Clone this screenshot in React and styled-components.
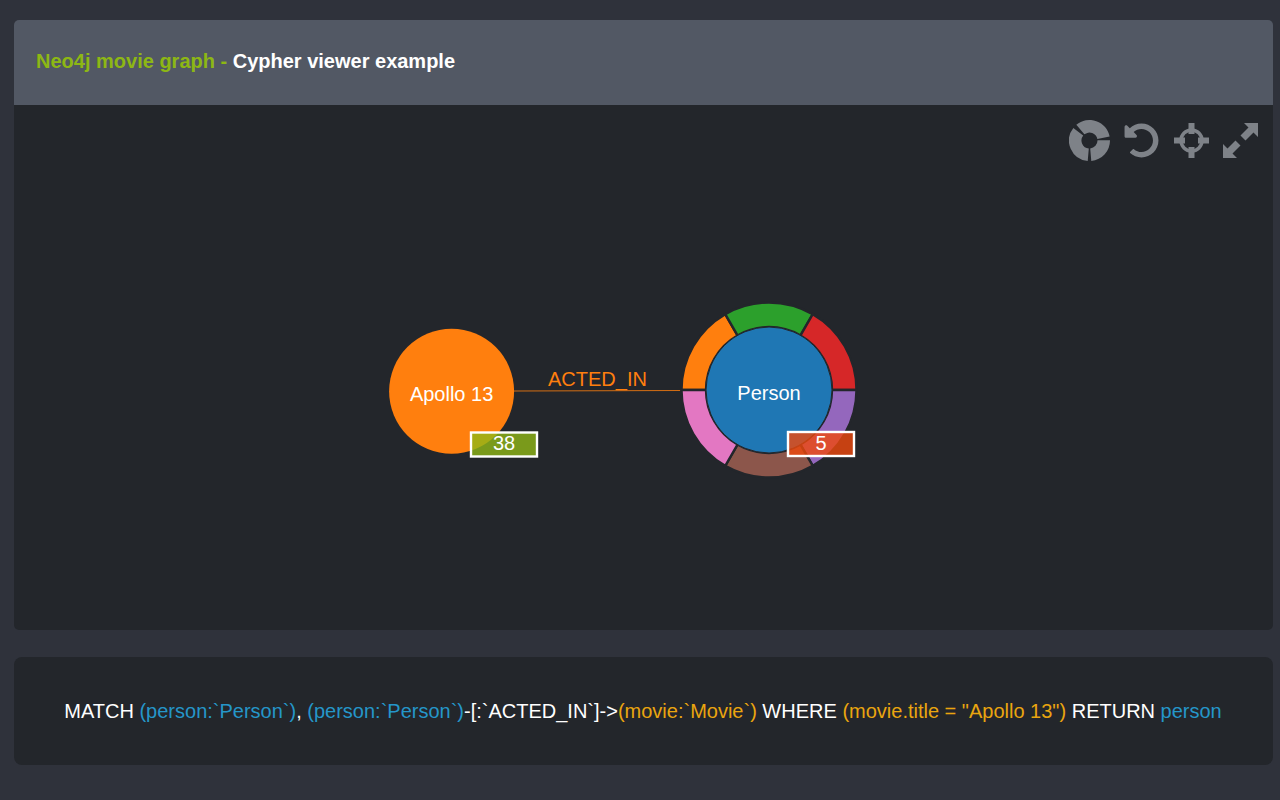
import React from 'react';
import styled, { createGlobalStyle } from 'styled-components';
import { FaUndoAlt } from 'react-icons/fa';

const GlobalStyle = createGlobalStyle`
  html, body {
    margin: 0;
    height: 100%;
    background-color: #2f323b;
    font-family: "Liberation Sans", Arial, sans-serif;
  }
`;

const Page = styled.div`
  display: flex;
  flex-direction: column;
  padding: 20px 7px 35px 14px;
`;

const Header = styled.header`
  display: flex;
  align-items: center;
  height: 85px;
  padding-left: 22px;
  padding-bottom: 2px;
  box-sizing: border-box;
  background-color: #525864;
  border-radius: 5px 5px 0 0;
  font-size: 20px;
  font-weight: bold;
  color: #ffffff;
`;

const Accent = styled.span`
  color: #8db714;
  white-space: pre;
`;

const GraphPanel = styled.section`
  position: relative;
  height: 525px;
  background-color: #23262b;
  border-radius: 0 0 5px 5px;
`;

const Toolbar = styled.div`
  position: absolute;
  top: 15px;
  right: 15px;
  display: flex;
  align-items: center;
  color: #7e8288;
`;

const ToolButton = styled.span`
  display: flex;
  margin-left: ${props => props.$gap}px;
`;

const Graph = styled.svg`
  display: block;
  width: 100%;
  height: 100%;
`;

const NodeLabel = styled.text`
  fill: #ffffff;
  font-size: 20px;
  text-anchor: middle;
`;

const LinkLabel = styled.text`
  fill: #ff7f0e;
  font-size: 20px;
`;

const QueryPanel = styled.section`
  display: flex;
  align-items: center;
  justify-content: center;
  height: 108px;
  margin-top: 27px;
  padding-right: 1px;
  box-sizing: border-box;
  background-color: #23262b;
  border-radius: 8px;
  font-size: 20px;
  color: #ffffff;
  white-space: pre;
`;

const Token = styled.span`
  color: ${props => (props.$kind === 'node' ? '#2596c9' : '#eaa50f')};
`;

const polar = (cx, cy, r, deg) => {
  const rad = (deg * Math.PI) / 180;
  return [cx + r * Math.cos(rad), cy + r * Math.sin(rad)];
};

const arcPath = (cx, cy, inner, outer, start, end) => {
  const [x1, y1] = polar(cx, cy, outer, start);
  const [x2, y2] = polar(cx, cy, outer, end);
  const [x3, y3] = polar(cx, cy, inner, end);
  const [x4, y4] = polar(cx, cy, inner, start);
  const large = end - start > 180 ? 1 : 0;
  return `M${x1} ${y1}A${outer} ${outer} 0 ${large} 1 ${x2} ${y2}L${x3} ${y3}A${inner} ${inner} 0 ${large} 0 ${x4} ${y4}Z`;
};

const ringSegments = [
  { color: '#ff7f0e', start: 180, end: 240 },
  { color: '#2ca02c', start: 240, end: 300 },
  { color: '#d62728', start: 300, end: 360 },
  { color: '#9467bd', start: 0, end: 60 },
  { color: '#8c564b', start: 60, end: 120 },
  { color: '#e377c2', start: 120, end: 180 },
];

const RingIcon = () => (
  <svg width="41" height="41" viewBox="0 0 41 41" fill="currentColor">
    <path d={arcPath(20.5, 20.5, 8, 20.5, -1, 85)} />
    <path d={arcPath(20.5, 20.5, 8, 20.5, 95, 218)} />
    <path d={arcPath(20.5, 20.5, 8, 20.5, 230, 349)} />
  </svg>
);

const CrosshairIcon = () => (
  <svg width="35" height="35" viewBox="0 0 35 35" fill="currentColor">
    <circle cx="17.5" cy="17.5" r="10.5" fill="none" stroke="currentColor" strokeWidth="3.5" />
    <rect x="14.5" y="0" width="6" height="11" />
    <rect x="14.5" y="24" width="6" height="11" />
    <rect x="0" y="14.5" width="11" height="6" />
    <rect x="24" y="14.5" width="11" height="6" />
  </svg>
);

const ExpandIcon = () => (
  <svg width="35" height="35" viewBox="0 0 35 35" fill="currentColor">
    <path d="M21 0H35V14L30.5 9.5L22.5 17.5L17.5 12.5L25.5 4.5Z" />
    <path d="M14 35H0V21L4.5 25.5L12.5 17.5L17.5 22.5L9.5 30.5Z" />
  </svg>
);

// badge fill sits over the node, so the colour shifts where they overlap
const Badge = ({ x, y, color, label }) => (
  <g>
    <rect x={x} y={y} width="66" height="24" fill={color} fillOpacity="0.8" stroke="#ffffff" strokeWidth="2.4" />
    <NodeLabel x={x + 33} y={y + 17.5}>{label}</NodeLabel>
  </g>
);

const App = () => (
  <Page>
    <GlobalStyle />
    <Header>
      <Accent>Neo4j movie graph - </Accent>
      Cypher viewer example
    </Header>
    <GraphPanel>
      <Graph viewBox="0 0 1259 525">
        <line x1="500" y1="286" x2="667" y2="285.5" stroke="#ff7f0e" strokeOpacity="0.8" strokeWidth="1" />
        <LinkLabel x="534" y="281">ACTED_IN</LinkLabel>

        <circle cx="437.6" cy="286.3" r="62.5" fill="#ff7f0e" />
        <NodeLabel x="437.6" y="296">Apollo 13</NodeLabel>
        <Badge x={457} y={327.5} color="#90b818" label="38" />

        {ringSegments.map(seg => (
          <path
            key={seg.color}
            d={arcPath(755, 285, 63, 87.5, seg.start, seg.end)}
            fill={seg.color}
            stroke="#23262b"
            strokeWidth="2.4"
          />
        ))}
        <circle cx="755" cy="285" r="63" fill="#1f77b4" stroke="#23262b" strokeWidth="1" />
        <NodeLabel x="755" y="295">Person</NodeLabel>
        <Badge x={774} y={327} color="#ef490c" label="5" />
      </Graph>
      <Toolbar>
        <ToolButton $gap={0}><RingIcon /></ToolButton>
        <ToolButton $gap={14}><FaUndoAlt size={35} /></ToolButton>
        <ToolButton $gap={15}><CrosshairIcon /></ToolButton>
        <ToolButton $gap={14}><ExpandIcon /></ToolButton>
      </Toolbar>
    </GraphPanel>
    <QueryPanel>
      MATCH <Token $kind="node">(person:`Person`)</Token>, <Token $kind="node">(person:`Person`)</Token>-[:`ACTED_IN`]-&gt;<Token $kind="movie">(movie:`Movie`)</Token> WHERE <Token $kind="movie">(movie.title = "Apollo 13")</Token> RETURN <Token $kind="node">person</Token>
    </QueryPanel>
  </Page>
);

export default App;
